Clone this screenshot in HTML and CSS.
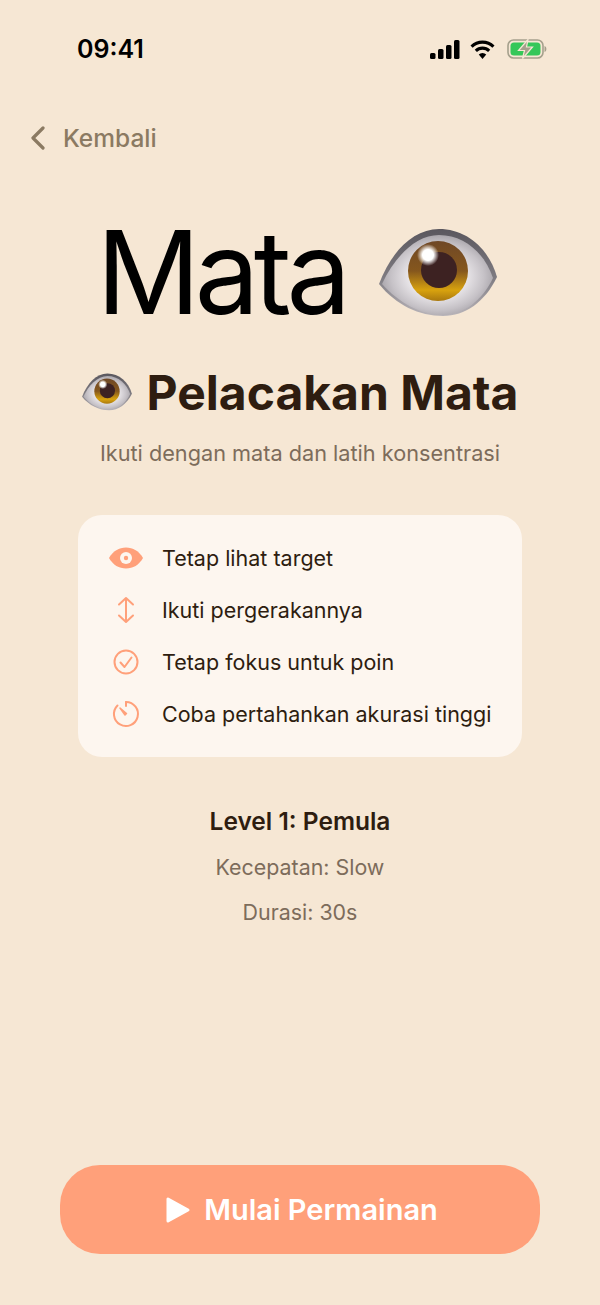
FILE: index.html
```html
<!DOCTYPE html>
<html lang="id">
<head>
    <meta charset="UTF-8">
    <title>Mata</title>
    <meta name="viewport" content="width=device-width, initial-scale=1.0">
    <link rel="stylesheet" href="styles.css">
</head>
<body>
    <svg class="defs" width="0" height="0">
        <defs>
            <radialGradient id="eyeWhite" cx="50%" cy="52%" r="58%">
                <stop offset="0.4" stop-color="#eeebee"/>
                <stop offset="0.72" stop-color="#c6c2c7"/>
                <stop offset="1" stop-color="#98949a"/>
            </radialGradient>
            <linearGradient id="eyeLid" x1="0" y1="0" x2="0" y2="1">
                <stop offset="0" stop-color="#5a575e"/>
                <stop offset="0.55" stop-color="#7d7a80"/>
                <stop offset="1" stop-color="#b9b5ba"/>
            </linearGradient>
            <linearGradient id="eyeIris" x1="0" y1="0" x2="0" y2="1">
                <stop offset="0" stop-color="#6f4826"/>
                <stop offset="0.5" stop-color="#85571d"/>
                <stop offset="0.82" stop-color="#d8a20e"/>
                <stop offset="1" stop-color="#a9780f"/>
            </linearGradient>
            <radialGradient id="eyeShine">
                <stop offset="0.5" stop-color="#fff"/>
                <stop offset="1" stop-color="#fff" stop-opacity="0"/>
            </radialGradient>
            <symbol id="eye" viewBox="0 0 118 90">
                <path d="M0 56C12 24 34 1 60 1c28 0 50 20 58 48-12 25-32 39-54 39C40 88 17 77 0 56Z" fill="url(#eyeLid)"/>
                <path d="M3 56C15 30 36 7 60 7c26 0 46 19 54 43-11 23-30 37-50 37C42 87 20 75 3 56Z" fill="url(#eyeWhite)"/>
                <circle cx="59" cy="43" r="30" fill="url(#eyeIris)"/>
                <circle cx="60" cy="42" r="18" fill="#3d2222"/>
                <circle cx="49" cy="27" r="11" fill="url(#eyeShine)"/>
            </symbol>
        </defs>
    </svg>

    <div class="screen">
        <div class="status-bar">
            <span class="status-time">09:41</span>
            <div class="status-icons">
                <svg width="30" height="19" viewBox="0 0 30 19">
                    <rect x="0" y="13" width="5.5" height="6" rx="1.5" fill="#000"/>
                    <rect x="8" y="9" width="5.5" height="10" rx="1.5" fill="#000"/>
                    <rect x="16" y="5" width="5.5" height="14" rx="1.5" fill="#000"/>
                    <rect x="24" y="0" width="5.5" height="19" rx="1.5" fill="#000"/>
                </svg>
                <svg width="25" height="20" viewBox="0 0 24 19">
                    <path d="M1.5 7.2a15 15 0 0 1 21 0" fill="none" stroke="#000" stroke-width="3"/>
                    <path d="M5.6 11.2a9.2 9.2 0 0 1 12.8 0" fill="none" stroke="#000" stroke-width="3"/>
                    <path d="M12 19l-3.6-4.2a5 5 0 0 1 7.2 0Z" fill="#000"/>
                </svg>
                <svg class="status-battery" width="40" height="20" viewBox="0 0 40 20">
                    <rect x="1" y="1" width="35" height="18" rx="5.5" fill="none" stroke="#a5a08c" stroke-width="1.6"/>
                    <rect x="3.5" y="3.5" width="30" height="13" rx="3.5" fill="#35c759"/>
                    <path d="M37.500 7c2.500 .5 2.500 5.500 0 6Z" fill="#a5a08c"/>
                    <path d="M21 .5 11.500 11.500H17.500l-2 8 10-11.500h-6Z" fill="#a5a08c" stroke="#f6e7d4" stroke-width="1.200"/>
                </svg>
            </div>
        </div>

        <div class="back-row">
            <svg width="16" height="24" viewBox="0 0 16 24">
                <path d="M13 2 3 12l10 10" fill="none" stroke="#8b7a62" stroke-width="3.200" stroke-linecap="round" stroke-linejoin="round"/>
            </svg>
            <span>Kembali</span>
        </div>

        <div class="title-row">
            <h1 class="page-title">Mata</h1>
            <svg class="eye-big"><use href="#eye"/></svg>
        </div>

        <div class="game-row">
            <svg class="eye-small"><use href="#eye"/></svg>
            <h2 class="game-title">Pelacakan Mata</h2>
        </div>

        <p class="game-desc">Ikuti dengan mata dan latih konsentrasi</p>

        <div class="rules-card">
            <div class="rule">
                <svg class="rule-icon" viewBox="0 0 36 36">
                    <path d="M1 18C5 11 11 7.500 18 7.500S31 11 35 18c-4 7-10 10.500-17 10.500S5 25 1 18Z" fill="#ffa07a"/>
                    <circle cx="18" cy="18" r="6" fill="#fdf6ef"/>
                    <circle cx="18" cy="18" r="2.200" fill="#ffa07a"/>
                </svg>
                <span>Tetap lihat target</span>
            </div>
            <div class="rule">
                <svg class="rule-icon" viewBox="0 0 36 36">
                    <path d="M18 7v22M11 12.500 18 6l7 6.500M11 23.500l7 6.500 7-6.500" fill="none" stroke="#ffa07a" stroke-width="2" stroke-linecap="round" stroke-linejoin="round"/>
                </svg>
                <span>Ikuti pergerakannya</span>
            </div>
            <div class="rule">
                <svg class="rule-icon" viewBox="0 0 36 36">
                    <circle cx="18" cy="18" r="11.500" fill="none" stroke="#ffa07a" stroke-width="2"/>
                    <path d="M12.500 18.500l4 4.500 7-9.500" fill="none" stroke="#ffa07a" stroke-width="2" stroke-linecap="round" stroke-linejoin="round"/>
                </svg>
                <span>Tetap fokus untuk poin</span>
            </div>
            <div class="rule">
                <svg class="rule-icon" viewBox="0 0 36 36">
                    <path d="M18 6a12 12 0 1 1-8.500 3.500" fill="none" stroke="#ffa07a" stroke-width="2" stroke-linecap="round"/>
                    <path d="M18 6v4" fill="none" stroke="#ffa07a" stroke-width="2" stroke-linecap="round"/>
                    <path d="M12 12l6.500 5.500-1.500 1.500Z" fill="#ffa07a" stroke="#ffa07a" stroke-width="1.500" stroke-linejoin="round"/>
                </svg>
                <span>Coba pertahankan akurasi tinggi</span>
            </div>
        </div>

        <div class="level-info">
            <div class="level-name">Level 1: Pemula</div>
            <div class="level-meta">Kecepatan: Slow</div>
            <div class="level-meta">Durasi: 30s</div>
        </div>

        <div class="start-btn">
            <svg width="26" height="28" viewBox="0 0 26 28">
                <path d="M3 3v22l20-11Z" fill="#fff" stroke="#fff" stroke-width="3" stroke-linejoin="round"/>
            </svg>
            <span>Mulai Permainan</span>
        </div>
    </div>
</body>
</html>
```

FILE: styles.css
```css
html, body {
    margin: 0;
    padding: 0;
}
body {
    font-family: Inter, "Liberation Sans", sans-serif;
    background-color: #f6e7d4;
    color: #2e1d10;
}
.defs {
    position: absolute;
}
.screen {
    display: flex;
    flex-direction: column;
    align-items: center;
    height: 1305px;
    box-sizing: border-box;
    padding-bottom: 51px;
}

.status-bar {
    display: flex;
    align-items: center;
    justify-content: space-between;
    align-self: stretch;
    height: 30px;
    margin-top: 34px;
    padding: 0 53px 0 77px;
}
.status-time {
    font-size: 25px;
    font-weight: 600;
    color: #000;
}
.status-icons {
    display: flex;
    align-items: center;
    gap: 10px;
}
.status-battery {
    margin-left: 2px;
}

.back-row {
    display: flex;
    align-items: center;
    gap: 17px;
    align-self: stretch;
    height: 30px;
    margin-top: 59px;
    padding-left: 30px;
    color: #8b7a62;
    font-size: 24.5px;
    font-weight: 500;
}

.title-row {
    display: flex;
    align-items: center;
    justify-content: center;
    gap: 33px;
    margin-top: 62px;
    padding-right: 7px;
    height: 116px;
}
.page-title {
    margin: 0;
    font-size: 115px;
    font-weight: 400;
    letter-spacing: -5.5px;
    color: #000;
    line-height: 116px;
}
.eye-big {
    width: 118px;
    height: 90px;
}

.game-row {
    display: flex;
    align-items: center;
    gap: 15px;
    margin-top: 33px;
    height: 56px;
}
.eye-small {
    width: 50px;
    height: 38px;
}
.game-title {
    margin: 0;
    font-size: 48px;
    font-weight: 700;
    color: #2e1d10;
}
.game-desc {
    margin: 19px 0 0;
    font-size: 21.7px;
    line-height: 28px;
    color: #7d6c5b;
}

.rules-card {
    display: flex;
    flex-direction: column;
    gap: 16px;
    box-sizing: border-box;
    width: 444px;
    margin-top: 48px;
    padding: 25px 20px 25px 30px;
    background-color: #fdf6ef;
    border-radius: 24px;
}
.rule {
    display: flex;
    align-items: center;
    gap: 18px;
    height: 36px;
    font-size: 21.5px;
    white-space: nowrap;
    color: #2e1d10;
}
.rule-icon {
    width: 36px;
    height: 36px;
    flex-shrink: 0;
}

.level-info {
    display: flex;
    flex-direction: column;
    align-items: center;
    margin-top: 48px;
}
.level-name {
    font-size: 24.5px;
    font-weight: 600;
    line-height: 32px;
    margin-bottom: 1px;
    color: #2e1d10;
}
.level-meta {
    margin-top: 13px;
    font-size: 21.4px;
    line-height: 32px;
    color: #7d6c5b;
}

.start-btn {
    display: flex;
    align-items: center;
    justify-content: center;
    gap: 13px;
    box-sizing: border-box;
    width: 480px;
    height: 89px;
    margin-top: auto;
    padding-left: 3px;
    background-color: #ffa07a;
    border-radius: 40px;
    color: #fff;
    font-size: 29px;
    font-weight: 600;
}
```
